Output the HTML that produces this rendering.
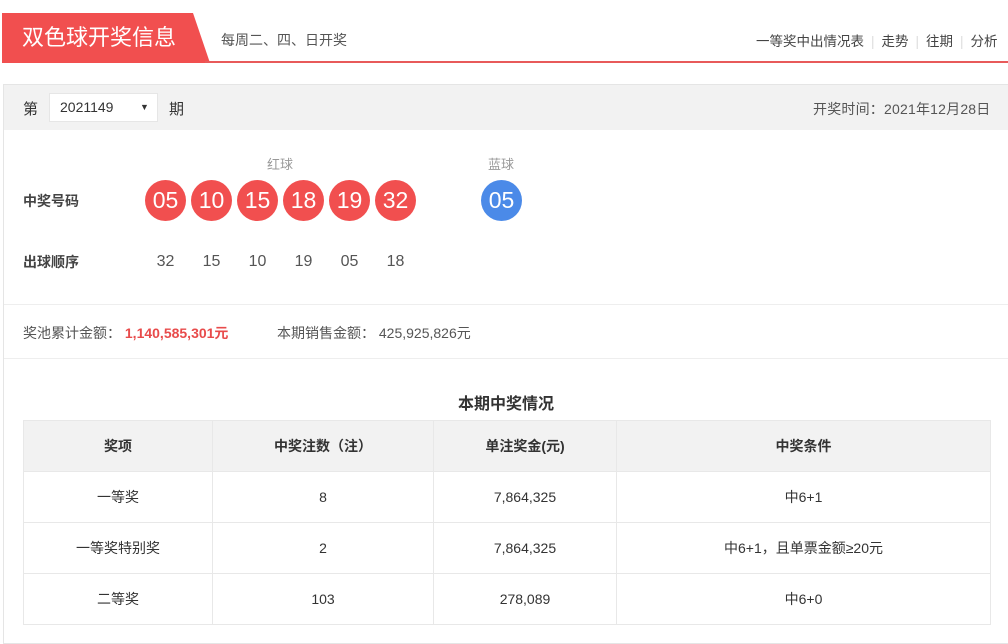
<!DOCTYPE html>
<html><head><meta charset="utf-8"><style>
*{margin:0;padding:0;box-sizing:border-box}
body{width:1008px;height:626px;overflow:hidden;background:#fff;font-family:"Liberation Sans","Noto Sans CJK SC",sans-serif;color:#333;position:relative}
.a{position:absolute;white-space:nowrap}
.ball{position:absolute;width:41px;height:41px;border-radius:50%;background:#f14f4f;color:#fff;font-size:23px;line-height:41px;text-align:center;top:180px}
.num{position:absolute;top:252px;width:41px;text-align:center;font-size:16px;color:#555}
table{position:absolute;left:23px;top:420px;width:968px;border-collapse:collapse;font-size:14px;color:#333}
td,th{border:1px solid #e8e8e8;height:51px;text-align:center;font-weight:normal}
th{background:#f2f2f2;font-weight:bold}
.sep{color:#ddd;margin:0 7px}
</style></head><body>
<svg class="a" style="left:0;top:0" width="1008" height="70"><polygon points="2,13 193,13 210,63 2,63" fill="#f14f4f"/><rect x="205" y="61" width="803" height="2" fill="#e85a5a"/></svg>
<div class="a" style="left:22px;top:23px;font-size:22px;color:#fff;line-height:30px">双色球开奖信息</div>
<div class="a" style="left:221px;top:30px;font-size:14px;color:#555">每周二、四、日开奖</div>
<div class="a" style="left:756px;top:30px;font-size:13.5px;color:#444">一等奖中出情况表<span class="sep">|</span>走势<span class="sep">|</span>往期<span class="sep">|</span>分析</div>
<div class="a" style="left:3px;top:84px;width:1010px;height:560px;border:1px solid #e5e5e5"></div>
<div class="a" style="left:4px;top:85px;width:1004px;height:45px;background:#f2f2f2"></div>
<div class="a" style="left:23px;top:98px;font-size:15px">第</div>
<div class="a" style="left:49px;top:93px;width:109px;height:29px;background:#fff;border:1px solid #e6e6e6;font-size:14px;line-height:27px;padding-left:10px">2021149<span style="position:absolute;left:90px;top:0;font-size:9px">▼</span></div>
<div class="a" style="left:169px;top:98px;font-size:15px">期</div>
<div class="a" style="left:813px;top:99px;font-size:14px;color:#555;letter-spacing:0.2px">开奖时间：2021年12月28日</div>
<div class="a" style="left:267px;top:154px;font-size:13px;color:#999">红球</div>
<div class="a" style="left:488px;top:154px;font-size:13px;color:#999">蓝球</div>
<div class="a" style="left:23px;top:191px;font-size:14px;font-weight:bold;color:#444">中奖号码</div>
<div class="a" style="left:23px;top:252px;font-size:14px;font-weight:bold;color:#444">出球顺序</div>
<div class="ball" style="left:145px">05</div><div class="ball" style="left:191px">10</div><div class="ball" style="left:237px">15</div><div class="ball" style="left:283px">18</div><div class="ball" style="left:329px">19</div><div class="ball" style="left:375px">32</div>
<div class="ball" style="left:481px;background:#4b8ae8">05</div>
<div class="num" style="left:145px;top:253px">32</div><div class="num" style="left:191px;top:253px">15</div><div class="num" style="left:237px;top:253px">10</div><div class="num" style="left:283px;top:253px">19</div><div class="num" style="left:329px;top:253px">05</div><div class="num" style="left:375px;top:253px">18</div>
<div class="a" style="left:4px;top:304px;width:1004px;height:1px;background:#eee"></div>
<div class="a" style="left:23px;top:323px;font-size:14px;color:#555">奖池累计金额： <b style="color:#e84b4b">1,140,585,301元</b></div>
<div class="a" style="left:277px;top:323px;font-size:14px;color:#555">本期销售金额： 425,925,826元</div>
<div class="a" style="left:4px;top:358px;width:1004px;height:1px;background:#eee"></div>
<div class="a" style="left:458px;top:390px;font-size:16px;font-weight:bold">本期中奖情况</div>
<table>
<tr><th style="width:189px">奖项</th><th style="width:221px">中奖注数（注）</th><th style="width:183px">单注奖金(元)</th><th>中奖条件</th></tr>
<tr><td>一等奖</td><td>8</td><td>7,864,325</td><td>中6+1</td></tr>
<tr><td>一等奖特别奖</td><td>2</td><td>7,864,325</td><td>中6+1，且单票金额≥20元</td></tr>
<tr><td>二等奖</td><td>103</td><td>278,089</td><td>中6+0</td></tr>
</table>
</body></html>
